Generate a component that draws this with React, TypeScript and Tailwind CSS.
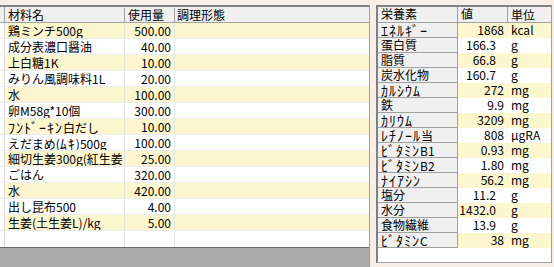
import React from 'react';

const ingredients: [string, string][] = [
  ['鶏ミンチ500g', '500.00'],
  ['成分表濃口醤油', '40.00'],
  ['上白糖1K', '10.00'],
  ['みりん風調味料1L', '20.00'],
  ['水', '100.00'],
  ['卵M58g*10個', '300.00'],
  ['ﾌﾝﾄﾞｰｷﾝ白だし', '10.00'],
  ['えだまめ(ﾑｷ)500g', '100.00'],
  ['細切生姜300g(紅生姜', '25.00'],
  ['ごはん', '320.00'],
  ['水', '420.00'],
  ['出し昆布500', '4.00'],
  ['生姜(土生姜L)/kg', '5.00'],
];

const nutrients: [string, string, string][] = [
  ['ｴﾈﾙｷﾞｰ', '1868', 'kcal'],
  ['蛋白質', '166.3', 'g'],
  ['脂質', '66.8', 'g'],
  ['炭水化物', '160.7', 'g'],
  ['ｶﾙｼｳﾑ', '272', 'mg'],
  ['鉄', '9.9', 'mg'],
  ['ｶﾘｳﾑ', '3209', 'mg'],
  ['ﾚﾁﾉｰﾙ当', '808', 'μgRA'],
  ['ﾋﾞﾀﾐﾝB1', '0.93', 'mg'],
  ['ﾋﾞﾀﾐﾝB2', '1.80', 'mg'],
  ['ﾅｲｱｼﾝ', '56.2', 'mg'],
  ['塩分', '11.2', 'g'],
  ['水分', '1432.0', 'g'],
  ['食物繊維', '13.9', 'g'],
  ['ﾋﾞﾀﾐﾝC', '38', 'mg'],
];

const font = "font-['MS_UI_Gothic','Noto_Sans_CJK_JP',sans-serif]";

// half-width kana come out small in Noto, so bump those runs up
function Label({ text }: { text: string }) {
  const parts = text.split(/([\uFF61-\uFF9F]+)/);
  return (
    <>
      {parts.map((p, i) =>
        /[\uFF61-\uFF9F]/.test(p) ? (
          <span key={i} className="text-[14px] leading-[14px] tracking-[1px]">{p}</span>
        ) : (
          <span key={i}>{p}</span>
        )
      )}
    </>
  );
}

export default function App() {
  return (
    <div className={`w-[554px] h-[267px] bg-[#f8eee5] flex pt-[5px] overflow-hidden text-[12px] leading-[14px] text-black ${font}`}>
      {/* ingredient grid */}
      <div className="w-[370px] h-[262px] flex flex-col border-t-2 border-[#808080] bg-white border-r border-r-[#a0a0a0]">
        <div className="flex h-[16px] items-center bg-[#f0f0f0] border-b border-[#a0a0a0]">
          <div className="w-[5px] h-full border-r border-[#a0a0a0]" />
          <div className="w-[120px] pl-[3px] border-r border-[#a0a0a0]">材料名</div>
          <div className="w-[50px] pl-[3px] border-r border-[#a0a0a0]">使用量</div>
          <div className="flex-1 pl-[2px]">調理形態</div>
        </div>
        {ingredients.map(([name, qty], i) => (
          <div key={i} className={`flex h-[16px] border-b border-[#ececec] ${i % 2 === 0 ? 'bg-[#fdf7cf]' : 'bg-white'}`}>
            <div className="w-[5px] bg-white border-r border-[#d8d8d8]" />
            <div className="w-[120px] pl-[3px] pt-px border-r border-[#e4e4e4] whitespace-nowrap overflow-hidden">
              <Label text={name} />
            </div>
            <div className="w-[50px] pr-[3px] pt-px text-right border-r border-[#e4e4e4]">{qty}</div>
            <div className="flex-1" />
          </div>
        ))}
        <div className="flex h-[16px]">
          <div className="w-[5px] border-r border-[#d8d8d8]" />
          <div className="w-[120px] border-r border-[#e4e4e4]" />
          <div className="w-[50px] border-r border-[#e4e4e4]" />
        </div>
        <div className="flex-1 bg-[#ababab] border-t border-[#696969]" />
      </div>

      {/* nutrient grid */}
      <div className="ml-[6px] w-[176px] h-[258px] flex flex-col border-t-2 border-l-2 border-[#808080] border-r border-r-[#a0a0a0] border-b border-b-[#a0a0a0] bg-white">
        <div className="flex h-[16px] items-center bg-[#f0f0f0] border-b border-[#a0a0a0]">
          <div className="w-[80px] h-full pl-[3px] border-r border-[#a0a0a0]">栄養素</div>
          <div className="w-[50px] h-full pl-[3px] border-r border-[#a0a0a0]">値</div>
          <div className="flex-1 pl-[3px]">単位</div>
        </div>
        {nutrients.map(([name, val, unit], i) => (
          <div key={i} className="flex h-[15px]">
            <div className="w-[80px] pl-[3px] bg-[#f0f0f0] border-r border-b border-[#a0a0a0] whitespace-nowrap">
              <Label text={name} />
            </div>
            <div className={`flex flex-1 ${i % 2 === 0 ? 'bg-[#fdf7cf]' : 'bg-white'}`}>
              <div className={`w-[50px] text-right ${unit === 'g' ? 'pr-[12px]' : 'pr-[4px]'}`}>{val}</div>
              <div className="flex-1 pl-[3px]">{unit}</div>
            </div>
          </div>
        ))}
      </div>
    </div>
  );
}
